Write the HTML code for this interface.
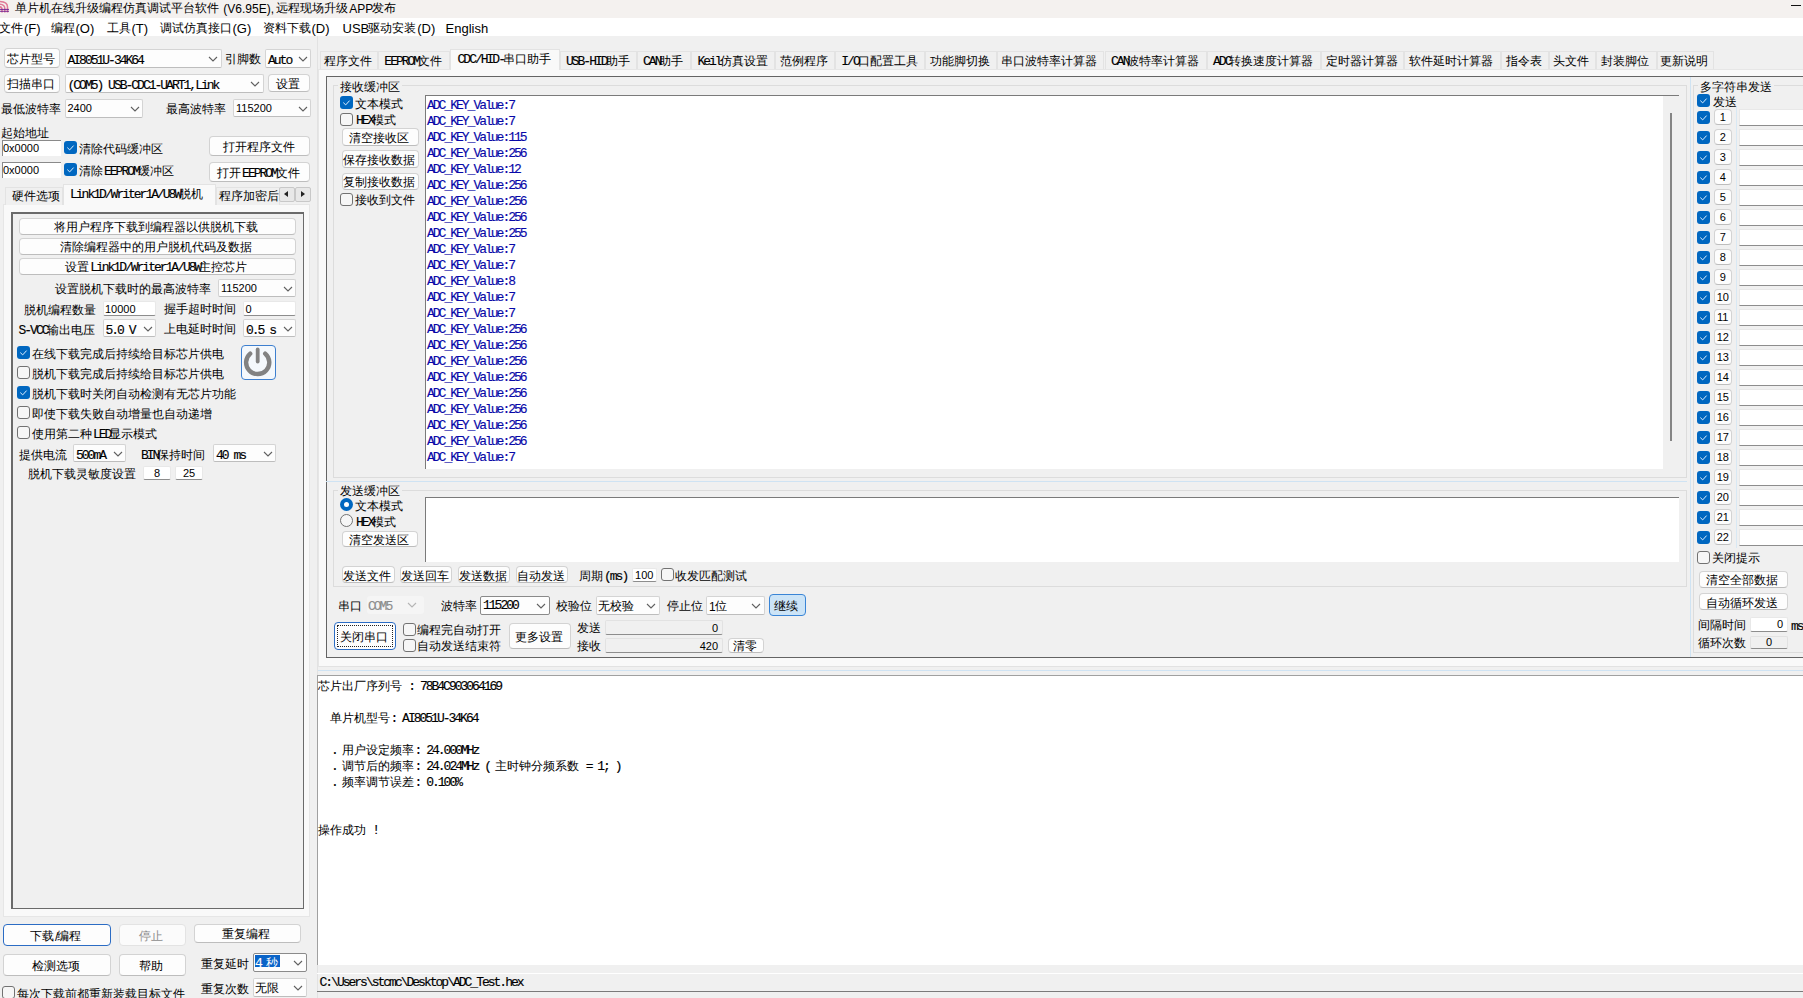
<!DOCTYPE html>
<html><head><meta charset="utf-8"><style>
html,body{margin:0;padding:0}
body{width:1803px;height:998px;overflow:hidden;position:relative;background:#f0f0f0;font-family:"Liberation Sans",sans-serif;font-size:12px;color:#000}
div{position:absolute;box-sizing:border-box}
.t{line-height:16px;font-size:12px;white-space:nowrap}
.k{font-family:"Liberation Sans",sans-serif;font-size:16px;line-height:0;letter-spacing:0;-webkit-text-stroke:0.35px currentColor;position:relative;left:-1px}
.m{font-family:"Liberation Mono",monospace;font-size:13px;letter-spacing:-2px;-webkit-text-stroke:0.15px currentColor}
.m .k{letter-spacing:0}
.r{}
.b{border:1px solid #d3d3d3;border-bottom-color:#bdbdbd;border-radius:4px;background:#fdfdfd}
.c{border:1px solid #d4d4d4;border-bottom-color:#bdbdbd;border-radius:2px;background:#fdfdfd}
.e{background:#fff;border:1px solid #e8e8e8;border-bottom-color:#8d8d8d;border-radius:2px}
.es{background:#fff;border-top:1px solid #8a8a8a;border-left:1px solid #8a8a8a}
.cb{border-radius:3px}
.cb.on{background:#0067c0}
.cb.off{background:#f6f6f6;border:1px solid #727272}
.rd{border-radius:50%}
.rd.on{background:#0067c0}
.rd.off{background:#f6f6f6;border:1px solid #727272}
.pg{background:#f9f9f9}
.tab{border:1px solid #e3e3e3;border-bottom:none;background:#f0f0f0}
.tab.act{background:#f9f9f9}
.frame{border:1px solid #646464;border-right:none;background:#f0f0f0}
.grp{border:1px solid #dcdcdc;border-radius:0}
.ui{}
.n{font-size:11px}
.gr{color:#8c8c8c}
.adc{color:#0808a8}
.def{border:1.5px solid #2b6cc4;border-radius:4px}
.dis{background:#fbfbfb;border-color:#e3e3e3}
.blue{background:#cce4f7;border:1px solid #3a85d6}
.dot::after{content:"";position:absolute;left:2px;top:2px;right:2px;bottom:2px;border:1px dotted #222}
.foc{border-color:#8a8a8a}
.eg{background:#f0f0f0;border:1px solid #e2e2e2;border-bottom-color:#8d8d8d;border-radius:2px}
.t.m{margin-top:1px}
.t.mx{margin-top:0}
.mx .k{top:1px}
.cjk .k{font-size:12px;-webkit-text-stroke:0;top:-1px}
.cjk .mx .k{top:0}

</style></head><body>
<div class="r" style="left:0px;top:0px;width:1803px;height:18px;background:#f4f1ef"></div>
<svg style="position:absolute;left:0;top:0" width="12" height="14"><g fill="none" stroke="#e07a98" stroke-width="1.5"><path d="M-1,1.6 Q7.5,1.6 7.5,7 V12.6"/><path d="M-1,4.2 Q4.8,4.2 4.8,8.5 V12.6"/><path d="M-1,6.8 Q2,6.8 2,9.5 V12.6"/></g><path d="M0,9.4 H9 M0,11.3 H9" stroke="#6a1a90" stroke-width="0.9"/></svg>
<div class="t ui" style="left:16px;top:1px;font-size:12px"><span class=k>单片机在线升级编程仿真调试平台软件</span> (V6.95E), <span class=k>远程现场升级</span>APP<span class=k>发布</span></div>
<div class="r" style="left:1791px;top:4.5px;width:10px;height:1.5px;background:#111"></div>
<div class="r" style="left:0px;top:18px;width:1803px;height:18px;background:#ffffff"></div>
<div class="t " style="left:0px;top:21px;font-size:13px"><span class=k>文件</span>(F)</div>
<div class="t " style="left:51.5px;top:21px;font-size:13px"><span class=k>编程</span>(O)</div>
<div class="t " style="left:107.5px;top:21px;font-size:13px"><span class=k>工具</span>(T)</div>
<div class="t " style="left:160.5px;top:21px;font-size:13px"><span class=k>调试仿真接口</span>(G)</div>
<div class="t " style="left:263.5px;top:21px;font-size:13px"><span class=k>资料下载</span>(D)</div>
<div class="t " style="left:342.5px;top:21px;font-size:13px">USB<span class=k>驱动安装</span>(D)</div>
<div class="t " style="left:445.5px;top:21px;font-size:13px">English</div>
<div class="b " style="left:4px;top:48px;width:56px;height:19.5px;"></div>
<div class="t " style="left:4px;top:52px;width:56px;text-align:center;"><span class=k>芯片型号</span></div>
<div class="c " style="left:64.5px;top:48.5px;width:157px;height:19px;"><svg width="10" height="6" style="position:absolute;right:2.5px;top:6px"><polyline points="1,1 5,5 9,1" fill="none" stroke="#606060" stroke-width="1.1"/></svg></div>
<div class="t m" style="left:67.5px;top:52px;">AI8051U-34K64</div>
<div class="t " style="left:226px;top:52px;"><span class=k>引脚数</span></div>
<div class="c " style="left:265px;top:49px;width:46px;height:18.5px;"><svg width="10" height="6" style="position:absolute;right:2.5px;top:6px"><polyline points="1,1 5,5 9,1" fill="none" stroke="#606060" stroke-width="1.1"/></svg></div>
<div class="t m" style="left:268px;top:52px;">Auto</div>
<div class="b " style="left:4px;top:74px;width:56px;height:18.5px;"></div>
<div class="t " style="left:4px;top:77px;width:56px;text-align:center;"><span class=k>扫描串口</span></div>
<div class="c " style="left:64.5px;top:73.5px;width:199px;height:19px;"><svg width="10" height="6" style="position:absolute;right:2.5px;top:6px"><polyline points="1,1 5,5 9,1" fill="none" stroke="#606060" stroke-width="1.1"/></svg></div>
<div class="t m" style="left:67.5px;top:77px;">(COM5) USB-CDC1-UART1,Link</div>
<div class="b " style="left:268px;top:74px;width:42px;height:18px;"></div>
<div class="t " style="left:268px;top:77px;width:42px;text-align:center;"><span class=k>设置</span></div>
<div class="t " style="left:2px;top:102px;"><span class=k>最低波特率</span></div>
<div class="c " style="left:64.5px;top:98.5px;width:78.5px;height:19px;"><svg width="10" height="6" style="position:absolute;right:2.5px;top:6px"><polyline points="1,1 5,5 9,1" fill="none" stroke="#606060" stroke-width="1.1"/></svg></div>
<div class="t n" style="left:67.5px;top:100px;">2400</div>
<div class="t " style="left:167px;top:102px;"><span class=k>最高波特率</span></div>
<div class="c " style="left:233px;top:99px;width:78px;height:18px;"><svg width="10" height="6" style="position:absolute;right:2.5px;top:5.5px"><polyline points="1,1 5,5 9,1" fill="none" stroke="#606060" stroke-width="1.1"/></svg></div>
<div class="t n" style="left:236px;top:100px;">115200</div>
<div class="t " style="left:2px;top:126px;"><span class=k>起始地址</span></div>
<div class="es" style="left:2px;top:140px;width:58.5px;height:15.5px;"></div>
<div class="t n" style="left:3px;top:140px;">0x0000</div>
<div class="cb on" style="left:64px;top:141px;width:13px;height:13px;"><svg width="13" height="13" style="position:absolute;left:0;top:0"><polyline points="3.3,6.6 5.7,8.9 9.6,4.6" fill="none" stroke="#dff0ff" stroke-width="1"/></svg></div>
<div class="t " style="left:80px;top:141.5px;"><span class=k>清除代码缓冲区</span></div>
<div class="es" style="left:2px;top:162px;width:58.5px;height:15.5px;"></div>
<div class="t n" style="left:3px;top:162px;">0x0000</div>
<div class="cb on" style="left:64px;top:163px;width:13px;height:13px;"><svg width="13" height="13" style="position:absolute;left:0;top:0"><polyline points="3.3,6.6 5.7,8.9 9.6,4.6" fill="none" stroke="#dff0ff" stroke-width="1"/></svg></div>
<div class="t m mx" style="left:80px;top:163.5px;"><span class=k>清除</span>EEPROM<span class=k>缓冲区</span></div>
<div class="b " style="left:209px;top:135.5px;width:101px;height:20.5px;"></div>
<div class="t " style="left:209px;top:140px;width:101px;text-align:center;"><span class=k>打开程序文件</span></div>
<div class="b " style="left:209px;top:161.5px;width:101px;height:20.5px;"></div>
<div class="t m mx" style="left:209px;top:166px;width:101px;text-align:center;"><span class=k>打开</span>EEPROM<span class=k>文件</span></div>
<div class="pg" style="left:3px;top:204px;width:307px;height:713px;border:1px solid #e6e6e6"></div>
<div class="tab" style="left:4.5px;top:186.5px;width:58.5px;height:18px;"></div>
<div class="t " style="left:13px;top:189px;"><span class=k>硬件选项</span></div>
<div class="tab act" style="left:63px;top:184px;width:152.5px;height:21px;"></div>
<div class="t m mx" style="left:70px;top:187px;">Link1D/Writer1A/U8W<span class=k>脱机</span></div>
<div class="tab" style="left:215.5px;top:186.5px;width:64px;height:18px;"></div>
<div style="left:215.5px;top:186px;width:64px;height:18px;overflow:hidden"><div class="t" style="left:4px;top:3px"><span class=k>程序加密后</span></div></div>
<div class="b" style="left:279px;top:186.5px;width:15.5px;height:15px;border-radius:2px;background:#e8e8e8;border-color:#c8c8c8"></div>
<div class="b" style="left:295px;top:186.5px;width:15.5px;height:15px;border-radius:2px;background:#e8e8e8;border-color:#c8c8c8"></div>
<svg style="position:absolute;left:279px;top:186px" width="32" height="16"><path d="M9,5 L5,8 L9,11 Z" fill="#222"/><path d="M22,5 L26,8 L22,11 Z" fill="#222"/></svg>
<div class="frame" style="left:11px;top:212px;width:292.5px;height:697px;border:1px solid #6a6a6a;border-top-width:2px;border-left-width:2px"></div>
<div class="b " style="left:18.5px;top:217.5px;width:277.5px;height:17.5px;"></div>
<div class="t " style="left:18.5px;top:220px;width:277.5px;text-align:center;"><span class=k>将用户程序下载到编程器以供脱机下载</span></div>
<div class="b " style="left:18.5px;top:237.5px;width:277.5px;height:17.5px;"></div>
<div class="t " style="left:18.5px;top:240px;width:277.5px;text-align:center;"><span class=k>清除编程器中的用户脱机代码及数据</span></div>
<div class="b " style="left:18.5px;top:257.5px;width:277.5px;height:17.5px;"></div>
<div class="t m mx" style="left:18.5px;top:260px;width:277.5px;text-align:center;"><span class=k>设置</span>Link1D/Writer1A/U8W<span class=k>主控芯片</span></div>
<div class="t " style="left:56px;top:282px;"><span class=k>设置脱机下载时的最高波特率</span></div>
<div class="c " style="left:218px;top:279px;width:78px;height:18px;"><svg width="10" height="6" style="position:absolute;right:2.5px;top:5.5px"><polyline points="1,1 5,5 9,1" fill="none" stroke="#606060" stroke-width="1.1"/></svg></div>
<div class="t n" style="left:221px;top:280px;">115200</div>
<div class="t " style="left:25px;top:302.5px;"><span class=k>脱机编程数量</span></div>
<div class="e" style="left:102.5px;top:301px;width:53.5px;height:15px;"></div>
<div class="t n" style="left:105px;top:300.5px;">10000</div>
<div class="t " style="left:165px;top:302px;"><span class=k>握手超时时间</span></div>
<div class="e" style="left:243px;top:301px;width:53px;height:15px;"></div>
<div class="t n" style="left:245.5px;top:300.5px;">0</div>
<div class="t m mx" style="left:18.5px;top:322.5px;">S-VCC<span class=k>输出电压</span></div>
<div class="c " style="left:102.5px;top:319px;width:53.5px;height:18px;"><svg width="10" height="6" style="position:absolute;right:2.5px;top:5.5px"><polyline points="1,1 5,5 9,1" fill="none" stroke="#606060" stroke-width="1.1"/></svg></div>
<div class="t m" style="left:105.5px;top:321.5px;">5.0 V</div>
<div class="t " style="left:165px;top:322px;"><span class=k>上电延时时间</span></div>
<div class="c " style="left:243px;top:319px;width:53px;height:18px;"><svg width="10" height="6" style="position:absolute;right:2.5px;top:5.5px"><polyline points="1,1 5,5 9,1" fill="none" stroke="#606060" stroke-width="1.1"/></svg></div>
<div class="t m" style="left:246px;top:321.5px;">0.5 s</div>
<div class="cb on" style="left:17px;top:346px;width:13px;height:13px;"><svg width="13" height="13" style="position:absolute;left:0;top:0"><polyline points="3.3,6.6 5.7,8.9 9.6,4.6" fill="none" stroke="#dff0ff" stroke-width="1"/></svg></div>
<div class="t " style="left:33px;top:346.5px;"><span class=k>在线下载完成后持续给目标芯片供电</span></div>
<div class="cb off" style="left:17px;top:366px;width:13px;height:13px;"></div>
<div class="t " style="left:33px;top:366.5px;"><span class=k>脱机下载完成后持续给目标芯片供电</span></div>
<div class="cb on" style="left:17px;top:386px;width:13px;height:13px;"><svg width="13" height="13" style="position:absolute;left:0;top:0"><polyline points="3.3,6.6 5.7,8.9 9.6,4.6" fill="none" stroke="#dff0ff" stroke-width="1"/></svg></div>
<div class="t " style="left:33px;top:386.5px;"><span class=k>脱机下载时关闭自动检测有无芯片功能</span></div>
<div class="cb off" style="left:17px;top:406px;width:13px;height:13px;"></div>
<div class="t " style="left:33px;top:406.5px;"><span class=k>即使下载失败自动增量也自动递增</span></div>
<div class="cb off" style="left:17px;top:426px;width:13px;height:13px;"></div>
<div class="t m mx" style="left:33px;top:426.5px;"><span class=k>使用第二种</span>LED<span class=k>显示模式</span></div>
<div class="r" style="left:240.5px;top:344.5px;width:35.5px;height:35px;border:1.5px solid #3d7fcf;border-radius:4px;background:#f4f8fc"></div>
<svg style="position:absolute;left:240px;top:344px" width="36" height="36"><path d="M10.2,9.6 A11.6,11.6 0 1 0 25.2,9.6" fill="none" stroke="#828282" stroke-width="4.4" stroke-linecap="round"/><line x1="17.7" y1="5.5" x2="17.7" y2="17.5" stroke="#828282" stroke-width="3.8" stroke-linecap="round"/></svg>
<div class="t " style="left:19.5px;top:448px;"><span class=k>提供电流</span></div>
<div class="c " style="left:73px;top:444px;width:53px;height:18px;"><svg width="10" height="6" style="position:absolute;right:2.5px;top:5.5px"><polyline points="1,1 5,5 9,1" fill="none" stroke="#606060" stroke-width="1.1"/></svg></div>
<div class="t m" style="left:76px;top:447px;">500mA</div>
<div class="t m mx" style="left:141px;top:448px;">BIN<span class=k>保持时间</span></div>
<div class="c " style="left:213px;top:444px;width:63px;height:18px;"><svg width="10" height="6" style="position:absolute;right:2.5px;top:5.5px"><polyline points="1,1 5,5 9,1" fill="none" stroke="#606060" stroke-width="1.1"/></svg></div>
<div class="t m" style="left:216px;top:447px;">40 ms</div>
<div class="t " style="left:29px;top:467px;"><span class=k>脱机下载灵敏度设置</span></div>
<div class="e" style="left:143px;top:466px;width:28px;height:14px;"></div>
<div class="t n" style="left:143px;top:465px;width:28px;text-align:center;">8</div>
<div class="e" style="left:175px;top:466px;width:28px;height:14px;"></div>
<div class="t n" style="left:175px;top:465px;width:28px;text-align:center;">25</div>
<div class="b def" style="left:3px;top:923.5px;width:107.5px;height:22.5px;"></div>
<div class="t " style="left:3px;top:929px;width:107.5px;text-align:center;"><span class=k>下载</span>/<span class=k>编程</span></div>
<div class="b dis" style="left:118.5px;top:923.5px;width:67px;height:22.5px;"></div>
<div class="t gr" style="left:118.5px;top:929px;width:67px;text-align:center;"><span class=k>停止</span></div>
<div class="b " style="left:193.5px;top:923.5px;width:107px;height:19.5px;"></div>
<div class="t " style="left:193.5px;top:927px;width:107px;text-align:center;"><span class=k>重复编程</span></div>
<div class="b " style="left:3px;top:954px;width:107.5px;height:21.5px;"></div>
<div class="t " style="left:3px;top:959px;width:107.5px;text-align:center;"><span class=k>检测选项</span></div>
<div class="b " style="left:118.5px;top:954px;width:67px;height:21.5px;"></div>
<div class="t " style="left:118.5px;top:959px;width:67px;text-align:center;"><span class=k>帮助</span></div>
<div class="t " style="left:201.5px;top:957px;"><span class=k>重复延时</span></div>
<div class="c foc" style="left:252.5px;top:952.5px;width:54px;height:19px;"><svg width="10" height="6" style="position:absolute;right:2.5px;top:6px"><polyline points="1,1 5,5 9,1" fill="none" stroke="#606060" stroke-width="1.1"/></svg></div>
<div class="t " style="left:255.5px;top:956px;"></div>
<div class="r" style="left:254.5px;top:955px;width:25.5px;height:12px;background:#0a64c8"></div>
<div class="t m mx" style="left:255px;top:955.5px;color:#fff">4 <span class=k>秒</span></div>
<div class="t " style="left:201.5px;top:982px;"><span class=k>重复次数</span></div>
<div class="c " style="left:252.5px;top:977.5px;width:54px;height:19px;"><svg width="10" height="6" style="position:absolute;right:2.5px;top:6px"><polyline points="1,1 5,5 9,1" fill="none" stroke="#606060" stroke-width="1.1"/></svg></div>
<div class="t " style="left:255.5px;top:981px;"><span class=k>无限</span></div>
<div class="cb off" style="left:2px;top:985.5px;width:13px;height:13px;"></div>
<div class="t " style="left:18px;top:986.5px;"><span class=k>每次下载前都重新装载目标文件</span></div>
<div class="r" style="left:317px;top:36px;width:1px;height:962px;background:#e2e2e2"></div>
<div class="pg" style="left:317.5px;top:68.5px;width:1485.5px;height:598px;border-left:1px solid #e6e6e6;border-top:1px solid #e6e6e6;border-bottom:1px solid #e2e2e2"></div>
<div class="tab" style="left:319.5px;top:50.5px;width:58.5px;height:18.5px;"></div>
<div class="t " style="left:319.5px;top:54px;width:58.5px;text-align:center;"><span class=k>程序文件</span></div>
<div class="tab" style="left:378px;top:50.5px;width:71.5px;height:18.5px;"></div>
<div class="t m mx" style="left:378px;top:54px;width:71.5px;text-align:center;">EEPROM<span class=k>文件</span></div>
<div class="tab act" style="left:449.5px;top:48.5px;width:110.5px;height:21px;"></div>
<div class="t m mx" style="left:449.5px;top:52px;width:110.5px;text-align:center;">CDC/HID-<span class=k>串口助手</span></div>
<div class="tab" style="left:560px;top:50.5px;width:76.5px;height:18.5px;"></div>
<div class="t m mx" style="left:560px;top:54px;width:76.5px;text-align:center;">USB-HID<span class=k>助手</span></div>
<div class="tab" style="left:636.5px;top:50.5px;width:54.5px;height:18.5px;"></div>
<div class="t m mx" style="left:636.5px;top:54px;width:54.5px;text-align:center;">CAN<span class=k>助手</span></div>
<div class="tab" style="left:691px;top:50.5px;width:84px;height:18.5px;"></div>
<div class="t m mx" style="left:691px;top:54px;width:84px;text-align:center;">Keil<span class=k>仿真设置</span></div>
<div class="tab" style="left:775px;top:50.5px;width:60px;height:18.5px;"></div>
<div class="t " style="left:775px;top:54px;width:60px;text-align:center;"><span class=k>范例程序</span></div>
<div class="tab" style="left:835px;top:50.5px;width:90px;height:18.5px;"></div>
<div class="t m mx" style="left:835px;top:54px;width:90px;text-align:center;">I/O<span class=k>口配置工具</span></div>
<div class="tab" style="left:925px;top:50.5px;width:71.5px;height:18.5px;"></div>
<div class="t " style="left:925px;top:54px;width:71.5px;text-align:center;"><span class=k>功能脚切换</span></div>
<div class="tab" style="left:996.5px;top:50.5px;width:107.5px;height:18.5px;"></div>
<div class="t " style="left:996.5px;top:54px;width:107.5px;text-align:center;"><span class=k>串口波特率计算器</span></div>
<div class="tab" style="left:1104.5px;top:50.5px;width:102.5px;height:18.5px;"></div>
<div class="t m mx" style="left:1104.5px;top:54px;width:102.5px;text-align:center;">CAN<span class=k>波特率计算器</span></div>
<div class="tab" style="left:1206.5px;top:50.5px;width:114.5px;height:18.5px;"></div>
<div class="t m mx" style="left:1206.5px;top:54px;width:114.5px;text-align:center;">ADC<span class=k>转换速度计算器</span></div>
<div class="tab" style="left:1321px;top:50.5px;width:83px;height:18.5px;"></div>
<div class="t " style="left:1321px;top:54px;width:83px;text-align:center;"><span class=k>定时器计算器</span></div>
<div class="tab" style="left:1404px;top:50.5px;width:96.5px;height:18.5px;"></div>
<div class="t " style="left:1404px;top:54px;width:96.5px;text-align:center;"><span class=k>软件延时计算器</span></div>
<div class="tab" style="left:1500.5px;top:50.5px;width:48px;height:18.5px;"></div>
<div class="t " style="left:1500.5px;top:54px;width:48px;text-align:center;"><span class=k>指令表</span></div>
<div class="tab" style="left:1548.5px;top:50.5px;width:47px;height:18.5px;"></div>
<div class="t " style="left:1548.5px;top:54px;width:47px;text-align:center;"><span class=k>头文件</span></div>
<div class="tab" style="left:1595.5px;top:50.5px;width:61px;height:18.5px;"></div>
<div class="t " style="left:1595.5px;top:54px;width:61px;text-align:center;"><span class=k>封装脚位</span></div>
<div class="tab" style="left:1656.5px;top:50.5px;width:57.5px;height:18.5px;"></div>
<div class="t " style="left:1656.5px;top:54px;width:57.5px;text-align:center;"><span class=k>更新说明</span></div>
<div class="frame" style="left:326px;top:76px;width:1477px;height:581.5px;border-bottom:1px solid #646464"></div>
<div class="grp" style="left:332.5px;top:85px;width:1354.5px;height:392.5px;"></div>
<div class="r" style="left:338px;top:78px;width:64px;height:14px;background:#f0f0f0"></div>
<div class="t " style="left:341px;top:79.5px;"><span class=k>接收缓冲区</span></div>
<div class="cb on" style="left:340px;top:96px;width:13px;height:13px;"><svg width="13" height="13" style="position:absolute;left:0;top:0"><polyline points="3.3,6.6 5.7,8.9 9.6,4.6" fill="none" stroke="#dff0ff" stroke-width="1"/></svg></div>
<div class="t " style="left:356px;top:97px;"><span class=k>文本模式</span></div>
<div class="cb off" style="left:340px;top:112.5px;width:13px;height:13px;"></div>
<div class="t m mx" style="left:356px;top:113px;">HEX<span class=k>模式</span></div>
<div class="b " style="left:341.5px;top:128px;width:77px;height:17.5px;"></div>
<div class="t " style="left:341.5px;top:131px;width:77px;text-align:center;"><span class=k>清空接收区</span></div>
<div class="b " style="left:341.5px;top:150px;width:77px;height:17.5px;"></div>
<div class="t " style="left:341.5px;top:153px;width:77px;text-align:center;"><span class=k>保存接收数据</span></div>
<div class="b " style="left:341.5px;top:172.5px;width:77px;height:17.5px;"></div>
<div class="t " style="left:341.5px;top:175px;width:77px;text-align:center;"><span class=k>复制接收数据</span></div>
<div class="cb off" style="left:340px;top:192.5px;width:13px;height:13px;"></div>
<div class="t " style="left:356px;top:193px;"><span class=k>接收到文件</span></div>
<div class="r" style="left:425px;top:95px;width:1254px;height:374px;background:#fff;border-top:1px solid #7a7a7a;border-left:1px solid #7a7a7a"></div>
<div class="r" style="left:1663px;top:96px;width:16px;height:373px;background:#f0f0f0"></div>
<div class="r" style="left:1670px;top:113px;width:2px;height:328px;background:#858585"></div>
<div class="t m adc" style="left:427px;top:97px;">ADC_KEY_Value:7</div>
<div class="t m adc" style="left:427px;top:113px;">ADC_KEY_Value:7</div>
<div class="t m adc" style="left:427px;top:129px;">ADC_KEY_Value:115</div>
<div class="t m adc" style="left:427px;top:145px;">ADC_KEY_Value:256</div>
<div class="t m adc" style="left:427px;top:161px;">ADC_KEY_Value:12</div>
<div class="t m adc" style="left:427px;top:177px;">ADC_KEY_Value:256</div>
<div class="t m adc" style="left:427px;top:193px;">ADC_KEY_Value:256</div>
<div class="t m adc" style="left:427px;top:209px;">ADC_KEY_Value:256</div>
<div class="t m adc" style="left:427px;top:225px;">ADC_KEY_Value:255</div>
<div class="t m adc" style="left:427px;top:241px;">ADC_KEY_Value:7</div>
<div class="t m adc" style="left:427px;top:257px;">ADC_KEY_Value:7</div>
<div class="t m adc" style="left:427px;top:273px;">ADC_KEY_Value:8</div>
<div class="t m adc" style="left:427px;top:289px;">ADC_KEY_Value:7</div>
<div class="t m adc" style="left:427px;top:305px;">ADC_KEY_Value:7</div>
<div class="t m adc" style="left:427px;top:321px;">ADC_KEY_Value:256</div>
<div class="t m adc" style="left:427px;top:337px;">ADC_KEY_Value:256</div>
<div class="t m adc" style="left:427px;top:353px;">ADC_KEY_Value:256</div>
<div class="t m adc" style="left:427px;top:369px;">ADC_KEY_Value:256</div>
<div class="t m adc" style="left:427px;top:385px;">ADC_KEY_Value:256</div>
<div class="t m adc" style="left:427px;top:401px;">ADC_KEY_Value:256</div>
<div class="t m adc" style="left:427px;top:417px;">ADC_KEY_Value:256</div>
<div class="t m adc" style="left:427px;top:433px;">ADC_KEY_Value:256</div>
<div class="t m adc" style="left:427px;top:449px;">ADC_KEY_Value:7</div>
<div class="r" style="left:326px;top:481px;width:1361px;height:1px;background:#cfe3f3"></div>
<div class="grp" style="left:332.5px;top:489.5px;width:1354.5px;height:97px;"></div>
<div class="r" style="left:338px;top:483px;width:64px;height:14px;background:#f0f0f0"></div>
<div class="t " style="left:340.5px;top:484px;"><span class=k>发送缓冲区</span></div>
<div class="rd on" style="left:340px;top:498px;width:13px;height:13px;"><div style="position:absolute;left:4px;top:4px;width:5px;height:5px;border-radius:50%;background:#fff"></div></div>
<div class="t " style="left:356px;top:499px;"><span class=k>文本模式</span></div>
<div class="rd off" style="left:340px;top:514px;width:13px;height:13px;"></div>
<div class="t m mx" style="left:356px;top:515px;">HEX<span class=k>模式</span></div>
<div class="b " style="left:342px;top:530.5px;width:76px;height:16.5px;"></div>
<div class="t " style="left:342px;top:533px;width:76px;text-align:center;"><span class=k>清空发送区</span></div>
<div class="r" style="left:425px;top:497px;width:1254px;height:65px;background:#fff;border-top:1px solid #7a7a7a;border-left:1px solid #7a7a7a"></div>
<div class="b " style="left:342px;top:566px;width:52.5px;height:17px;"></div>
<div class="t " style="left:342px;top:568.5px;width:52.5px;text-align:center;"><span class=k>发送文件</span></div>
<div class="b " style="left:399.5px;top:566px;width:52px;height:17px;"></div>
<div class="t " style="left:399.5px;top:568.5px;width:52px;text-align:center;"><span class=k>发送回车</span></div>
<div class="b " style="left:457.5px;top:566px;width:52.5px;height:17px;"></div>
<div class="t " style="left:457.5px;top:568.5px;width:52.5px;text-align:center;"><span class=k>发送数据</span></div>
<div class="b " style="left:515.5px;top:566px;width:52.5px;height:17px;"></div>
<div class="t " style="left:515.5px;top:568.5px;width:52.5px;text-align:center;"><span class=k>自动发送</span></div>
<div class="t m mx" style="left:580px;top:569px;"><span class=k>周期</span>(ms)</div>
<div class="e" style="left:631.5px;top:567.5px;width:25.5px;height:14px;"></div>
<div class="t n" style="left:631.5px;top:566.5px;width:25.5px;text-align:center;">100</div>
<div class="cb off" style="left:660.5px;top:567.5px;width:13px;height:13px;"></div>
<div class="t " style="left:676px;top:568.5px;"><span class=k>收发匹配测试</span></div>
<div class="t " style="left:339px;top:599px;"><span class=k>串口</span></div>
<div class="r" style="left:366.5px;top:596px;width:57.5px;height:18px;background:#f5f5f5;border-radius:3px"></div>
<svg style="position:absolute;left:407px;top:602px" width="10" height="6"><polyline points="1,1 5,5 9,1" fill="none" stroke="#b5b5b5" stroke-width="1.1"/></svg>
<div class="t m gr" style="left:368px;top:597.5px;">COM5</div>
<div class="t " style="left:442px;top:599px;"><span class=k>波特率</span></div>
<div class="c foc" style="left:480px;top:595.5px;width:69.5px;height:19px;"><svg width="10" height="6" style="position:absolute;right:2.5px;top:6px"><polyline points="1,1 5,5 9,1" fill="none" stroke="#606060" stroke-width="1.1"/></svg></div>
<div class="t m" style="left:483px;top:597px;">115200</div>
<div class="t " style="left:557px;top:599px;"><span class=k>校验位</span></div>
<div class="c " style="left:595.5px;top:595.5px;width:64px;height:19px;"><svg width="10" height="6" style="position:absolute;right:2.5px;top:6px"><polyline points="1,1 5,5 9,1" fill="none" stroke="#606060" stroke-width="1.1"/></svg></div>
<div class="t " style="left:598.5px;top:599px;"><span class=k>无校验</span></div>
<div class="t " style="left:667.5px;top:599px;"><span class=k>停止位</span></div>
<div class="c " style="left:706px;top:595.5px;width:58.5px;height:19px;"><svg width="10" height="6" style="position:absolute;right:2.5px;top:6px"><polyline points="1,1 5,5 9,1" fill="none" stroke="#606060" stroke-width="1.1"/></svg></div>
<div class="t " style="left:709px;top:599px;">1<span class=k>位</span></div>
<div class="b blue" style="left:768.5px;top:594px;width:37.5px;height:21.5px;"></div>
<div class="t " style="left:768.5px;top:599px;width:37.5px;text-align:center;"><span class=k>继续</span></div>
<div class="b def dot" style="left:333.5px;top:622px;width:62px;height:27.5px;"></div>
<div class="t " style="left:333.5px;top:630px;width:62px;text-align:center;"><span class=k>关闭串口</span></div>
<div class="cb off" style="left:402.5px;top:623px;width:13px;height:13px;"></div>
<div class="t " style="left:417.5px;top:622.5px;"><span class=k>编程完自动打开</span></div>
<div class="cb off" style="left:402.5px;top:638.5px;width:13px;height:13px;"></div>
<div class="t " style="left:417.5px;top:638.5px;"><span class=k>自动发送结束符</span></div>
<div class="b " style="left:508.5px;top:623px;width:62px;height:26px;"></div>
<div class="t " style="left:508.5px;top:630px;width:62px;text-align:center;"><span class=k>更多设置</span></div>
<div class="t " style="left:578px;top:621px;"><span class=k>发送</span></div>
<div class="eg" style="left:605px;top:620px;width:118px;height:14.5px;"></div>
<div class="t n" style="left:605px;top:619.5px;width:113px;text-align:right;">0</div>
<div class="t " style="left:578px;top:639px;"><span class=k>接收</span></div>
<div class="eg" style="left:605px;top:638px;width:118px;height:14.5px;"></div>
<div class="t n" style="left:605px;top:637.5px;width:113px;text-align:right;">420</div>
<div class="b " style="left:728px;top:637.5px;width:36px;height:15.5px;"></div>
<div class="t " style="left:728px;top:639px;width:36px;text-align:center;"><span class=k>清零</span></div>
<div class="r" style="left:1689.5px;top:77px;width:1px;height:580px;background:#cfe3f3"></div>
<div class="grp" style="left:1692.5px;top:85px;width:120px;height:567.5px;"></div>
<div class="r" style="left:1698px;top:78px;width:76px;height:14px;background:#f0f0f0"></div>
<div class="t " style="left:1700.5px;top:79.5px;"><span class=k>多字符串发送</span></div>
<div class="cb on" style="left:1697px;top:93.5px;width:13px;height:13px;"><svg width="13" height="13" style="position:absolute;left:0;top:0"><polyline points="3.3,6.6 5.7,8.9 9.6,4.6" fill="none" stroke="#dff0ff" stroke-width="1"/></svg></div>
<div class="t " style="left:1714px;top:94.5px;"><span class=k>发送</span></div>
<div class="r" style="left:1736px;top:107px;width:1px;height:441px;background:#d8e8f4"></div>
<div class="cb on" style="left:1697px;top:110.5px;width:13px;height:13px;"><svg width="13" height="13" style="position:absolute;left:0;top:0"><polyline points="3.3,6.6 5.7,8.9 9.6,4.6" fill="none" stroke="#dff0ff" stroke-width="1"/></svg></div>
<div class="b " style="left:1713.5px;top:108.5px;width:18.5px;height:16.5px;"></div>
<div class="t n" style="left:1713.5px;top:108.5px;width:18.5px;text-align:center;">1</div>
<div class="e" style="left:1739px;top:108.5px;width:70px;height:17px;border-radius:0;border-right:none"></div>
<div class="cb on" style="left:1697px;top:130.5px;width:13px;height:13px;"><svg width="13" height="13" style="position:absolute;left:0;top:0"><polyline points="3.3,6.6 5.7,8.9 9.6,4.6" fill="none" stroke="#dff0ff" stroke-width="1"/></svg></div>
<div class="b " style="left:1713.5px;top:128.5px;width:18.5px;height:16.5px;"></div>
<div class="t n" style="left:1713.5px;top:128.5px;width:18.5px;text-align:center;">2</div>
<div class="e" style="left:1739px;top:128.5px;width:70px;height:17px;border-radius:0;border-right:none"></div>
<div class="cb on" style="left:1697px;top:150.5px;width:13px;height:13px;"><svg width="13" height="13" style="position:absolute;left:0;top:0"><polyline points="3.3,6.6 5.7,8.9 9.6,4.6" fill="none" stroke="#dff0ff" stroke-width="1"/></svg></div>
<div class="b " style="left:1713.5px;top:148.5px;width:18.5px;height:16.5px;"></div>
<div class="t n" style="left:1713.5px;top:148.5px;width:18.5px;text-align:center;">3</div>
<div class="e" style="left:1739px;top:148.5px;width:70px;height:17px;border-radius:0;border-right:none"></div>
<div class="cb on" style="left:1697px;top:170.5px;width:13px;height:13px;"><svg width="13" height="13" style="position:absolute;left:0;top:0"><polyline points="3.3,6.6 5.7,8.9 9.6,4.6" fill="none" stroke="#dff0ff" stroke-width="1"/></svg></div>
<div class="b " style="left:1713.5px;top:168.5px;width:18.5px;height:16.5px;"></div>
<div class="t n" style="left:1713.5px;top:168.5px;width:18.5px;text-align:center;">4</div>
<div class="e" style="left:1739px;top:168.5px;width:70px;height:17px;border-radius:0;border-right:none"></div>
<div class="cb on" style="left:1697px;top:190.5px;width:13px;height:13px;"><svg width="13" height="13" style="position:absolute;left:0;top:0"><polyline points="3.3,6.6 5.7,8.9 9.6,4.6" fill="none" stroke="#dff0ff" stroke-width="1"/></svg></div>
<div class="b " style="left:1713.5px;top:188.5px;width:18.5px;height:16.5px;"></div>
<div class="t n" style="left:1713.5px;top:188.5px;width:18.5px;text-align:center;">5</div>
<div class="e" style="left:1739px;top:188.5px;width:70px;height:17px;border-radius:0;border-right:none"></div>
<div class="cb on" style="left:1697px;top:210.5px;width:13px;height:13px;"><svg width="13" height="13" style="position:absolute;left:0;top:0"><polyline points="3.3,6.6 5.7,8.9 9.6,4.6" fill="none" stroke="#dff0ff" stroke-width="1"/></svg></div>
<div class="b " style="left:1713.5px;top:208.5px;width:18.5px;height:16.5px;"></div>
<div class="t n" style="left:1713.5px;top:208.5px;width:18.5px;text-align:center;">6</div>
<div class="e" style="left:1739px;top:208.5px;width:70px;height:17px;border-radius:0;border-right:none"></div>
<div class="cb on" style="left:1697px;top:230.5px;width:13px;height:13px;"><svg width="13" height="13" style="position:absolute;left:0;top:0"><polyline points="3.3,6.6 5.7,8.9 9.6,4.6" fill="none" stroke="#dff0ff" stroke-width="1"/></svg></div>
<div class="b " style="left:1713.5px;top:228.5px;width:18.5px;height:16.5px;"></div>
<div class="t n" style="left:1713.5px;top:228.5px;width:18.5px;text-align:center;">7</div>
<div class="e" style="left:1739px;top:228.5px;width:70px;height:17px;border-radius:0;border-right:none"></div>
<div class="cb on" style="left:1697px;top:250.5px;width:13px;height:13px;"><svg width="13" height="13" style="position:absolute;left:0;top:0"><polyline points="3.3,6.6 5.7,8.9 9.6,4.6" fill="none" stroke="#dff0ff" stroke-width="1"/></svg></div>
<div class="b " style="left:1713.5px;top:248.5px;width:18.5px;height:16.5px;"></div>
<div class="t n" style="left:1713.5px;top:248.5px;width:18.5px;text-align:center;">8</div>
<div class="e" style="left:1739px;top:248.5px;width:70px;height:17px;border-radius:0;border-right:none"></div>
<div class="cb on" style="left:1697px;top:270.5px;width:13px;height:13px;"><svg width="13" height="13" style="position:absolute;left:0;top:0"><polyline points="3.3,6.6 5.7,8.9 9.6,4.6" fill="none" stroke="#dff0ff" stroke-width="1"/></svg></div>
<div class="b " style="left:1713.5px;top:268.5px;width:18.5px;height:16.5px;"></div>
<div class="t n" style="left:1713.5px;top:268.5px;width:18.5px;text-align:center;">9</div>
<div class="e" style="left:1739px;top:268.5px;width:70px;height:17px;border-radius:0;border-right:none"></div>
<div class="cb on" style="left:1697px;top:290.5px;width:13px;height:13px;"><svg width="13" height="13" style="position:absolute;left:0;top:0"><polyline points="3.3,6.6 5.7,8.9 9.6,4.6" fill="none" stroke="#dff0ff" stroke-width="1"/></svg></div>
<div class="b " style="left:1713.5px;top:288.5px;width:18.5px;height:16.5px;"></div>
<div class="t n" style="left:1713.5px;top:288.5px;width:18.5px;text-align:center;">10</div>
<div class="e" style="left:1739px;top:288.5px;width:70px;height:17px;border-radius:0;border-right:none"></div>
<div class="cb on" style="left:1697px;top:310.5px;width:13px;height:13px;"><svg width="13" height="13" style="position:absolute;left:0;top:0"><polyline points="3.3,6.6 5.7,8.9 9.6,4.6" fill="none" stroke="#dff0ff" stroke-width="1"/></svg></div>
<div class="b " style="left:1713.5px;top:308.5px;width:18.5px;height:16.5px;"></div>
<div class="t n" style="left:1713.5px;top:308.5px;width:18.5px;text-align:center;">11</div>
<div class="e" style="left:1739px;top:308.5px;width:70px;height:17px;border-radius:0;border-right:none"></div>
<div class="cb on" style="left:1697px;top:330.5px;width:13px;height:13px;"><svg width="13" height="13" style="position:absolute;left:0;top:0"><polyline points="3.3,6.6 5.7,8.9 9.6,4.6" fill="none" stroke="#dff0ff" stroke-width="1"/></svg></div>
<div class="b " style="left:1713.5px;top:328.5px;width:18.5px;height:16.5px;"></div>
<div class="t n" style="left:1713.5px;top:328.5px;width:18.5px;text-align:center;">12</div>
<div class="e" style="left:1739px;top:328.5px;width:70px;height:17px;border-radius:0;border-right:none"></div>
<div class="cb on" style="left:1697px;top:350.5px;width:13px;height:13px;"><svg width="13" height="13" style="position:absolute;left:0;top:0"><polyline points="3.3,6.6 5.7,8.9 9.6,4.6" fill="none" stroke="#dff0ff" stroke-width="1"/></svg></div>
<div class="b " style="left:1713.5px;top:348.5px;width:18.5px;height:16.5px;"></div>
<div class="t n" style="left:1713.5px;top:348.5px;width:18.5px;text-align:center;">13</div>
<div class="e" style="left:1739px;top:348.5px;width:70px;height:17px;border-radius:0;border-right:none"></div>
<div class="cb on" style="left:1697px;top:370.5px;width:13px;height:13px;"><svg width="13" height="13" style="position:absolute;left:0;top:0"><polyline points="3.3,6.6 5.7,8.9 9.6,4.6" fill="none" stroke="#dff0ff" stroke-width="1"/></svg></div>
<div class="b " style="left:1713.5px;top:368.5px;width:18.5px;height:16.5px;"></div>
<div class="t n" style="left:1713.5px;top:368.5px;width:18.5px;text-align:center;">14</div>
<div class="e" style="left:1739px;top:368.5px;width:70px;height:17px;border-radius:0;border-right:none"></div>
<div class="cb on" style="left:1697px;top:390.5px;width:13px;height:13px;"><svg width="13" height="13" style="position:absolute;left:0;top:0"><polyline points="3.3,6.6 5.7,8.9 9.6,4.6" fill="none" stroke="#dff0ff" stroke-width="1"/></svg></div>
<div class="b " style="left:1713.5px;top:388.5px;width:18.5px;height:16.5px;"></div>
<div class="t n" style="left:1713.5px;top:388.5px;width:18.5px;text-align:center;">15</div>
<div class="e" style="left:1739px;top:388.5px;width:70px;height:17px;border-radius:0;border-right:none"></div>
<div class="cb on" style="left:1697px;top:410.5px;width:13px;height:13px;"><svg width="13" height="13" style="position:absolute;left:0;top:0"><polyline points="3.3,6.6 5.7,8.9 9.6,4.6" fill="none" stroke="#dff0ff" stroke-width="1"/></svg></div>
<div class="b " style="left:1713.5px;top:408.5px;width:18.5px;height:16.5px;"></div>
<div class="t n" style="left:1713.5px;top:408.5px;width:18.5px;text-align:center;">16</div>
<div class="e" style="left:1739px;top:408.5px;width:70px;height:17px;border-radius:0;border-right:none"></div>
<div class="cb on" style="left:1697px;top:430.5px;width:13px;height:13px;"><svg width="13" height="13" style="position:absolute;left:0;top:0"><polyline points="3.3,6.6 5.7,8.9 9.6,4.6" fill="none" stroke="#dff0ff" stroke-width="1"/></svg></div>
<div class="b " style="left:1713.5px;top:428.5px;width:18.5px;height:16.5px;"></div>
<div class="t n" style="left:1713.5px;top:428.5px;width:18.5px;text-align:center;">17</div>
<div class="e" style="left:1739px;top:428.5px;width:70px;height:17px;border-radius:0;border-right:none"></div>
<div class="cb on" style="left:1697px;top:450.5px;width:13px;height:13px;"><svg width="13" height="13" style="position:absolute;left:0;top:0"><polyline points="3.3,6.6 5.7,8.9 9.6,4.6" fill="none" stroke="#dff0ff" stroke-width="1"/></svg></div>
<div class="b " style="left:1713.5px;top:448.5px;width:18.5px;height:16.5px;"></div>
<div class="t n" style="left:1713.5px;top:448.5px;width:18.5px;text-align:center;">18</div>
<div class="e" style="left:1739px;top:448.5px;width:70px;height:17px;border-radius:0;border-right:none"></div>
<div class="cb on" style="left:1697px;top:470.5px;width:13px;height:13px;"><svg width="13" height="13" style="position:absolute;left:0;top:0"><polyline points="3.3,6.6 5.7,8.9 9.6,4.6" fill="none" stroke="#dff0ff" stroke-width="1"/></svg></div>
<div class="b " style="left:1713.5px;top:468.5px;width:18.5px;height:16.5px;"></div>
<div class="t n" style="left:1713.5px;top:468.5px;width:18.5px;text-align:center;">19</div>
<div class="e" style="left:1739px;top:468.5px;width:70px;height:17px;border-radius:0;border-right:none"></div>
<div class="cb on" style="left:1697px;top:490.5px;width:13px;height:13px;"><svg width="13" height="13" style="position:absolute;left:0;top:0"><polyline points="3.3,6.6 5.7,8.9 9.6,4.6" fill="none" stroke="#dff0ff" stroke-width="1"/></svg></div>
<div class="b " style="left:1713.5px;top:488.5px;width:18.5px;height:16.5px;"></div>
<div class="t n" style="left:1713.5px;top:488.5px;width:18.5px;text-align:center;">20</div>
<div class="e" style="left:1739px;top:488.5px;width:70px;height:17px;border-radius:0;border-right:none"></div>
<div class="cb on" style="left:1697px;top:510.5px;width:13px;height:13px;"><svg width="13" height="13" style="position:absolute;left:0;top:0"><polyline points="3.3,6.6 5.7,8.9 9.6,4.6" fill="none" stroke="#dff0ff" stroke-width="1"/></svg></div>
<div class="b " style="left:1713.5px;top:508.5px;width:18.5px;height:16.5px;"></div>
<div class="t n" style="left:1713.5px;top:508.5px;width:18.5px;text-align:center;">21</div>
<div class="e" style="left:1739px;top:508.5px;width:70px;height:17px;border-radius:0;border-right:none"></div>
<div class="cb on" style="left:1697px;top:530.5px;width:13px;height:13px;"><svg width="13" height="13" style="position:absolute;left:0;top:0"><polyline points="3.3,6.6 5.7,8.9 9.6,4.6" fill="none" stroke="#dff0ff" stroke-width="1"/></svg></div>
<div class="b " style="left:1713.5px;top:528.5px;width:18.5px;height:16.5px;"></div>
<div class="t n" style="left:1713.5px;top:528.5px;width:18.5px;text-align:center;">22</div>
<div class="e" style="left:1739px;top:528.5px;width:70px;height:17px;border-radius:0;border-right:none"></div>
<div class="cb off" style="left:1697px;top:550.5px;width:13px;height:13px;"></div>
<div class="t " style="left:1713px;top:550.5px;"><span class=k>关闭提示</span></div>
<div class="b " style="left:1698.5px;top:570.5px;width:89px;height:17px;"></div>
<div class="t " style="left:1698.5px;top:573px;width:89px;text-align:center;"><span class=k>清空全部数据</span></div>
<div class="b " style="left:1698.5px;top:593px;width:89px;height:17px;"></div>
<div class="t " style="left:1698.5px;top:595.5px;width:89px;text-align:center;"><span class=k>自动循环发送</span></div>
<div class="t " style="left:1699px;top:618px;"><span class=k>间隔时间</span></div>
<div class="e" style="left:1750px;top:616.5px;width:38px;height:15px;"></div>
<div class="t n" style="left:1750px;top:616px;width:33px;text-align:right;">0</div>
<div class="t m" style="left:1791px;top:618px;">ms</div>
<div class="t " style="left:1699px;top:636px;"><span class=k>循环次数</span></div>
<div class="eg" style="left:1750px;top:635.5px;width:38px;height:13.5px;"></div>
<div class="t n" style="left:1750px;top:634px;width:38px;text-align:center;">0</div>
<div class="r" style="left:317.5px;top:670px;width:1485.5px;height:1px;background:#cfe3f3"></div>
<div class="r" style="left:317px;top:675px;width:1486px;height:290px;background:#fff;border-top:1px solid #a0a0a0;border-left:1px solid #a0a0a0"></div>
<div class="t m mx" style="left:318.5px;top:678.5px;"><span class=k>芯片出厂序列号</span> : 78B4C903064169</div>
<div class="t m mx" style="left:330.5px;top:710.5px;"><span class=k>单片机型号</span>: AI8051U-34K64</div>
<div class="t m mx" style="left:331px;top:742.5px;">. <span class=k>用户设定频率</span>: 24.000MHz</div>
<div class="t m mx" style="left:331px;top:758.5px;">. <span class=k>调节后的频率</span>: 24.024MHz ( <span class=k>主时钟分频系数</span> = 1; )</div>
<div class="t m mx" style="left:331px;top:774.5px;">. <span class=k>频率调节误差</span>: 0.100%</div>
<div class="t m mx" style="left:318.5px;top:822.5px;"><span class=k>操作成功</span> !</div>
<div class="r" style="left:317px;top:973px;width:1486px;height:1px;background:#ffffff"></div>
<div class="t m" style="left:319.5px;top:974px;">C:\Users\stcmc\Desktop\ADC_Test.hex</div>
<div class="r" style="left:317px;top:991px;width:1486px;height:1px;background:#7a7a7a"></div>
<script>(function(){var s=document.createElement("span");s.style.cssText="position:absolute;left:0;top:0;font:16px \"Liberation Sans\",sans-serif;white-space:nowrap;visibility:hidden";s.textContent="\u82af\u82af\u82af\u82af";document.body.appendChild(s);var w=s.getBoundingClientRect().width;document.body.removeChild(s);if(w>56){document.documentElement.className+=" cjk";}})();</script>
</body></html>
